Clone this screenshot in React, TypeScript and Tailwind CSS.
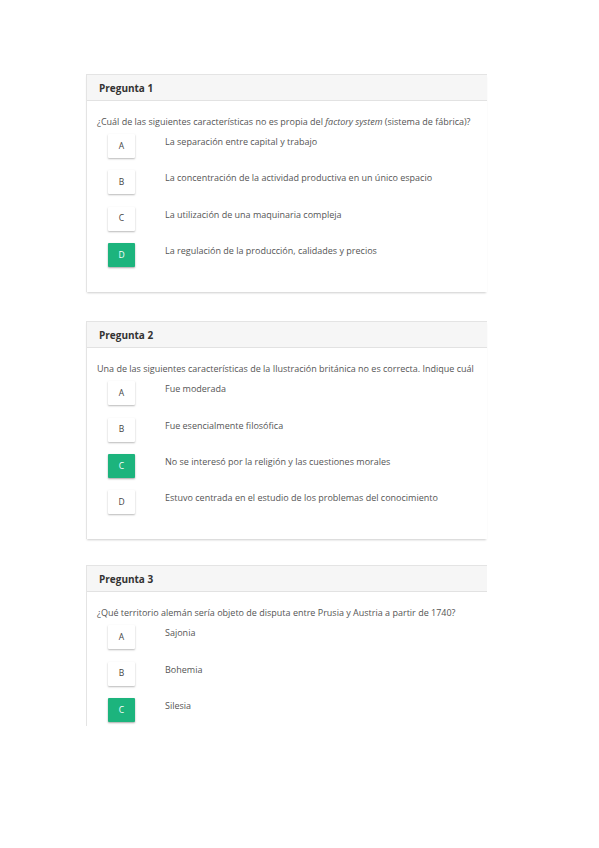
import React from "react";

type Opt = { l: string; t: string; sel?: boolean };
type Q = { n: number; q: React.ReactNode; opts: Opt[]; cut?: boolean };

const qs: Q[] = [
  {
    n: 1,
    q: (
      <>
        ¿Cuál de las siguientes características no es propia del <i>factory system</i> (sistema de fábrica)?
      </>
    ),
    opts: [
      { l: "A", t: "La separación entre capital y trabajo" },
      { l: "B", t: "La concentración de la actividad productiva en un único espacio" },
      { l: "C", t: "La utilización de una maquinaria compleja" },
      { l: "D", t: "La regulación de la producción, calidades y precios", sel: true },
    ],
  },
  {
    n: 2,
    q: "Una de las siguientes características de la Ilustración británica no es correcta. Indique cuál",
    opts: [
      { l: "A", t: "Fue moderada" },
      { l: "B", t: "Fue esencialmente filosófica" },
      { l: "C", t: "No se interesó por la religión y las cuestiones morales", sel: true },
      { l: "D", t: "Estuvo centrada en el estudio de los problemas del conocimiento" },
    ],
  },
  {
    n: 3,
    q: "¿Qué territorio alemán sería objeto de disputa entre Prusia y Austria a partir de 1740?",
    opts: [
      { l: "A", t: "Sajonia" },
      { l: "B", t: "Bohemia" },
      { l: "C", t: "Silesia", sel: true },
    ],
    cut: true,
  },
];

function Card({ q }: { q: Q }) {
  return (
    <div
      className={
        q.cut
          ? "w-[401px] bg-white border-l border-t border-[#e4e4e4] h-[161px] overflow-hidden"
          : "w-[401px] bg-white border-l border-t border-[#e4e4e4] shadow-[0_2px_2px_-1px_rgba(0,0,0,0.2)] pb-[25px]"
      }
    >
      <div className="h-[26px] bg-[#f6f6f6] border-b border-[#e2e2e2] flex items-center pl-[12px] pt-[1px]">
        <span className="text-[10px] font-bold text-[#333]">Pregunta {q.n}</span>
      </div>
      <div className="pl-[10px] pt-[14px]">
        <div className="text-[9px] leading-[14px] text-[#555] whitespace-nowrap">{q.q}</div>
        <div className="mt-[5px] pl-[11px] flex flex-col gap-[12.4px]">
          {q.opts.map((o) => (
            <div key={o.l} className="flex items-start">
              <div
                className={
                  o.sel
                    ? "w-[27px] h-[24px] flex items-center justify-center bg-[#1cb47d] text-white text-[8.5px] rounded-[1px] shadow-[0_1px_2px_rgba(0,0,0,0.35)]"
                    : "w-[27px] h-[24px] flex items-center justify-center bg-white text-[#444] text-[8.5px] rounded-[1px] shadow-[0_1px_2px_rgba(0,0,0,0.28)]"
                }
              >
                {o.l}
              </div>
              <div className="ml-[30px] mt-[1px] text-[9px] leading-[14px] text-[#555] whitespace-nowrap">{o.t}</div>
            </div>
          ))}
        </div>
      </div>
    </div>
  );
}

export default function App() {
  return (
    <div
      className="w-[599px] h-[848px] bg-white overflow-hidden"
      style={{ fontFamily: '"Open Sans", "Noto Sans", sans-serif' }}
    >
      <div className="pt-[74px] pl-[86px] flex flex-col">
        <Card q={qs[0]} />
        <div className="h-[29px]" />
        <Card q={qs[1]} />
        <div className="h-[26px]" />
        <Card q={qs[2]} />
      </div>
    </div>
  );
}
